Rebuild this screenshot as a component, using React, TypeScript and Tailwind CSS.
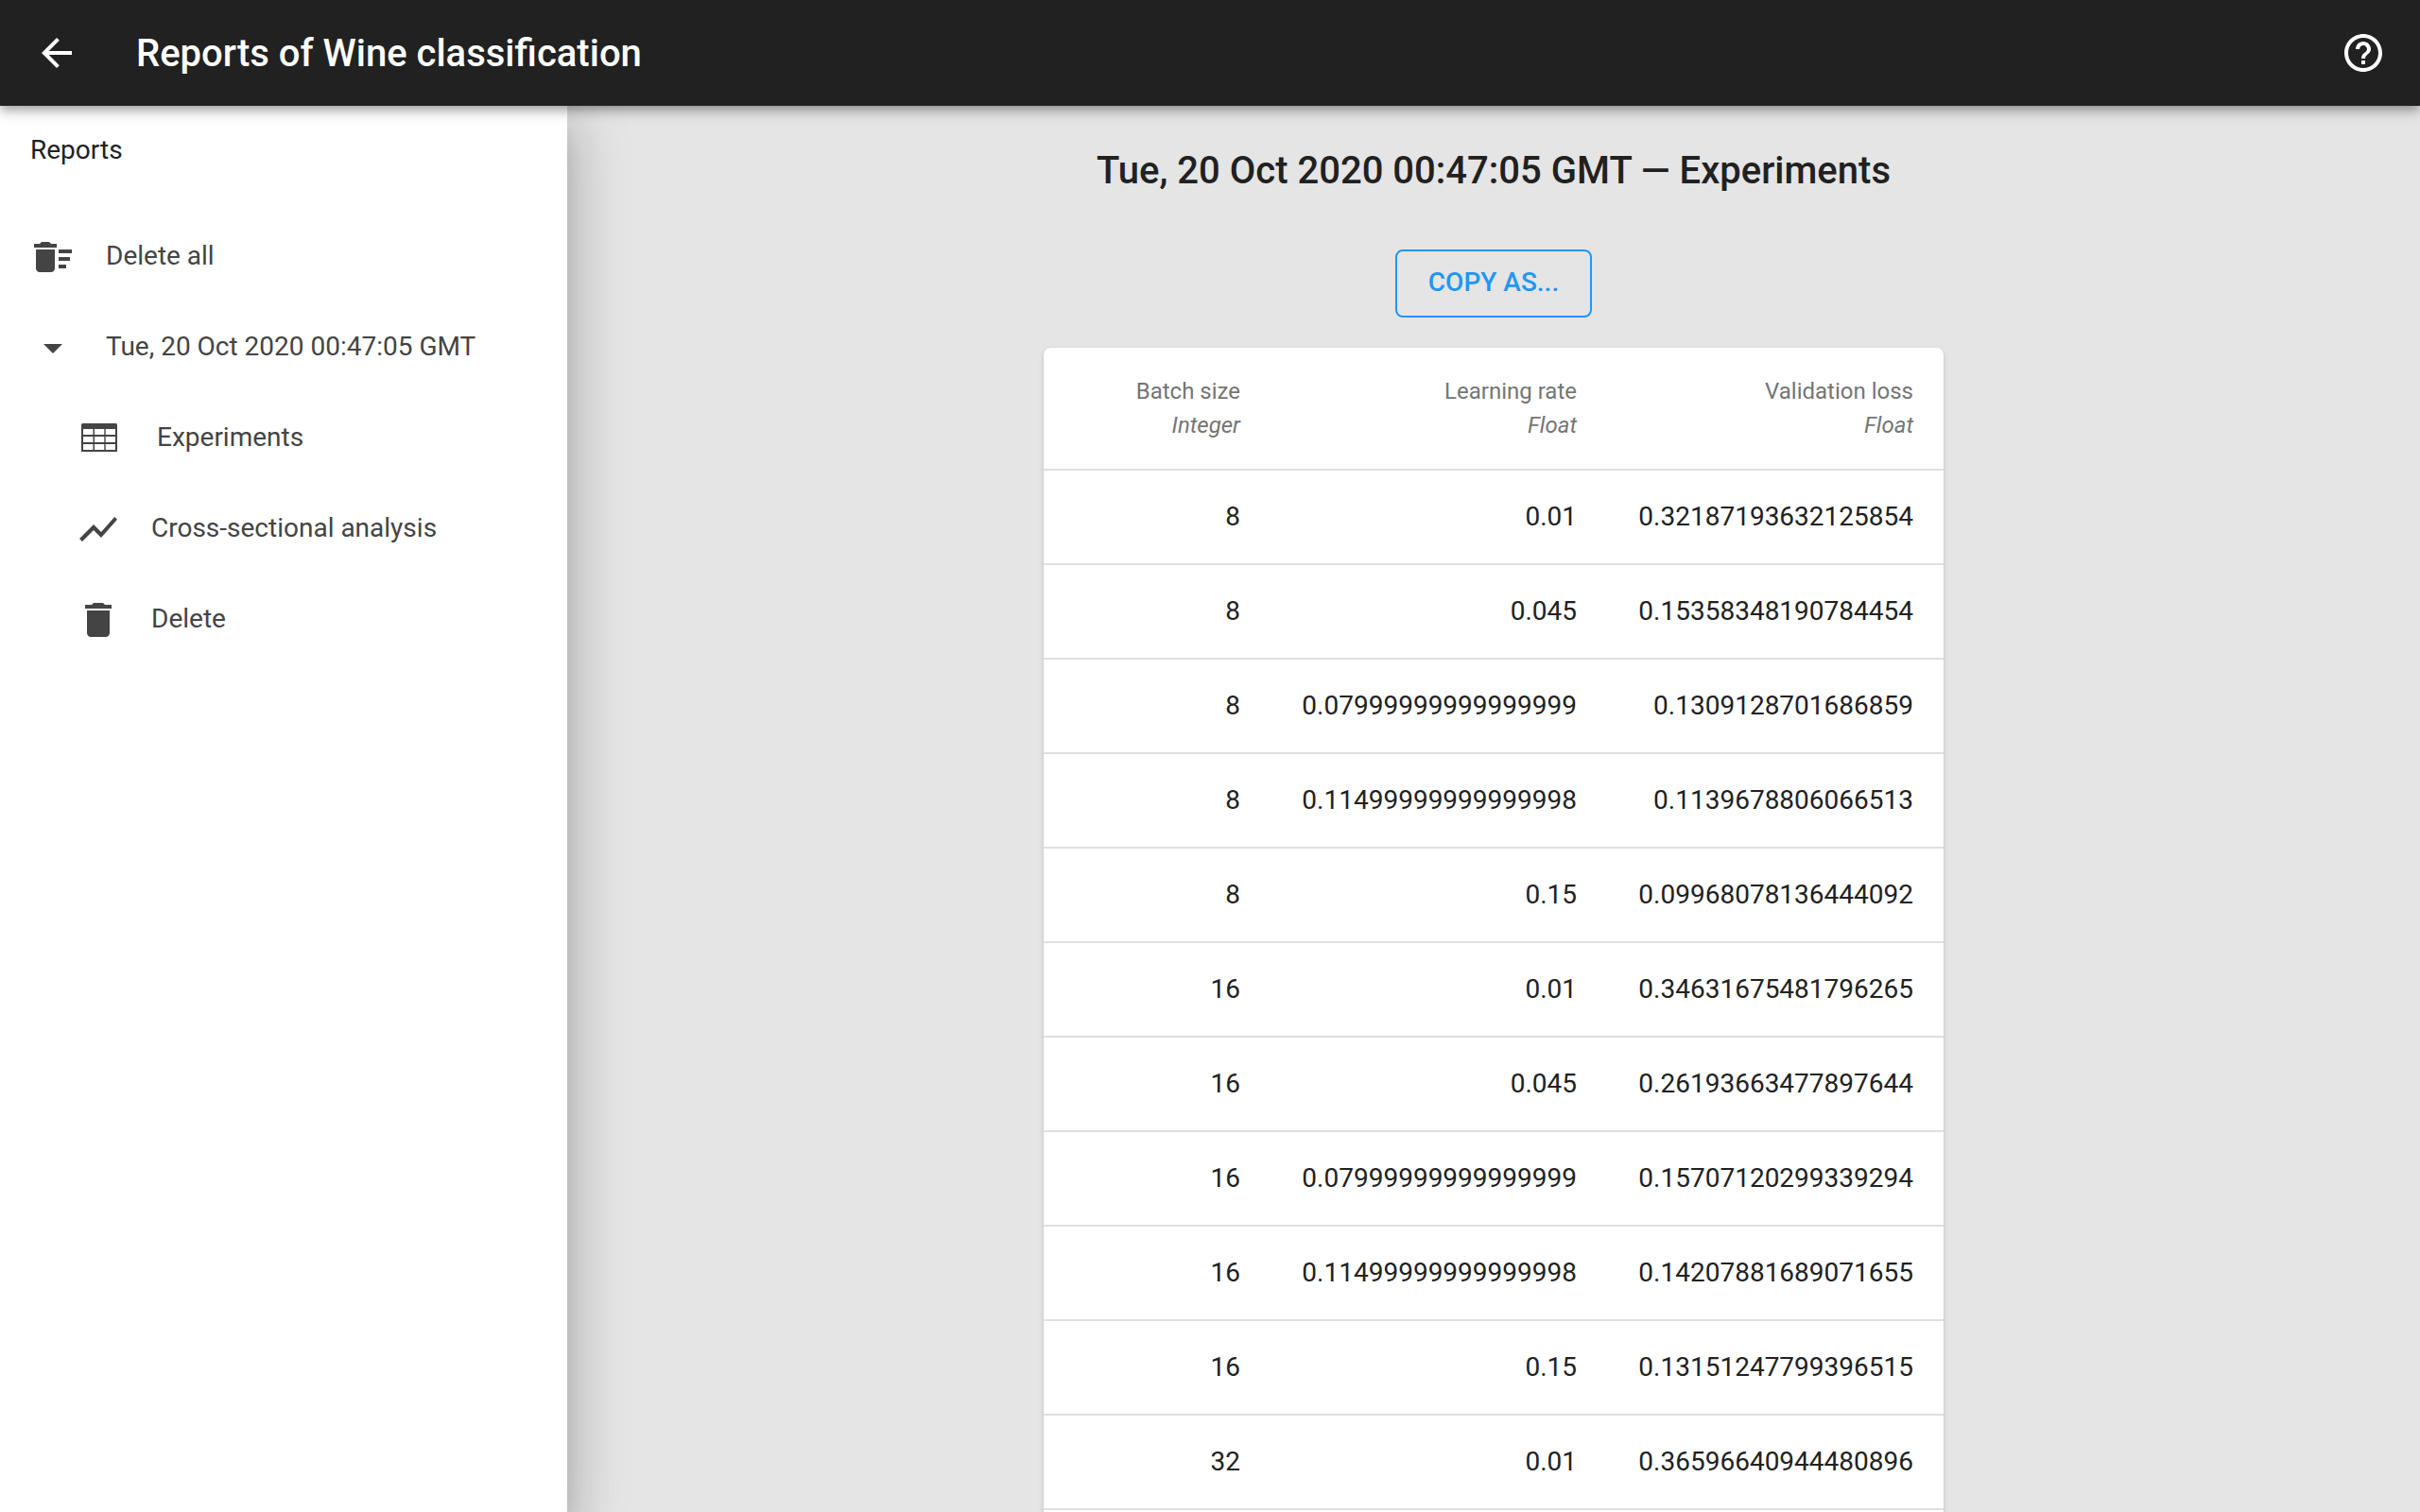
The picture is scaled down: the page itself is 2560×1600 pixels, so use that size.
import type { ReactNode } from "react";

type Row = [number, string, string];

const rows: Row[] = [
  [8, "0.01", "0.32187193632125854"],
  [8, "0.045", "0.15358348190784454"],
  [8, "0.07999999999999999", "0.1309128701686859"],
  [8, "0.11499999999999998", "0.1139678806066513"],
  [8, "0.15", "0.09968078136444092"],
  [16, "0.01", "0.34631675481796265"],
  [16, "0.045", "0.26193663477897644"],
  [16, "0.07999999999999999", "0.15707120299339294"],
  [16, "0.11499999999999998", "0.14207881689071655"],
  [16, "0.15", "0.13151247799396515"],
  [32, "0.01", "0.36596640944480896"],
];

const columns = [
  { name: "Batch size", type: "Integer", width: "min-w-60" },
  { name: "Learning rate", type: "Float", width: "min-w-[356px]" },
  { name: "Validation loss", type: "Float", width: "min-w-[356px]" },
];

const paths = {
  back: "M20 11H7.83l5.59-5.59L12 4l-8 8 8 8 1.41-1.41L7.83 13H20v-2z",
  help: "M11 18h2v-2h-2v2zm1-16C6.48 2 2 6.48 2 12s4.48 10 10 10 10-4.48 10-10S17.52 2 12 2zm0 18c-4.41 0-8-3.59-8-8s3.59-8 8-8 8 3.59 8 8-3.59 8-8 8zm0-14c-2.21 0-4 1.79-4 4h2c0-1.1.9-2 2-2s2 .9 2 2c0 2-3 1.75-3 5h2c0-2.25 3-2.5 3-5 0-2.21-1.79-4-4-4z",
  sweep: "M15 16h4v2h-4zm0-8h7v2h-7zm0 4h6v2h-6zM3 18c0 1.1.9 2 2 2h6c1.1 0 2-.9 2-2V8H3v10zM14 5h-3l-1-1H6L5 5H2v2h12z",
  down: "M7 10l5 5 5-5z",
  chart: "M3.5 18.49l6-6.01 4 4L22 6.92l-1.41-1.41-7.09 7.97-4-4L2 16.99z",
  trash: "M6 19c0 1.1.9 2 2 2h8c1.1 0 2-.9 2-2V7H6v12zM19 4h-3.5l-1-1h-5l-1 1H5v2h14V4z",
};

function Icon({ d }: { d: string }) {
  return (
    <svg viewBox="0 0 24 24" className="size-12 shrink-0 fill-current" aria-hidden="true">
      <path d={d} />
    </svg>
  );
}

function TableIcon() {
  return (
    <svg viewBox="0 0 48 48" className="size-12 shrink-0 fill-current" aria-hidden="true">
      <path
        fillRule="evenodd"
        d="M7.5 8h35a1.5 1.5 0 0 1 1.5 1.5V38H6V9.500a1.5 1.5 0 0 1 1.500-1.500zM8 14v6h10.500v-6zM20 14v6h10.300v-6zM31.700 14v6H42v-6zM8 22v6h10.500v-6zM20 22v6h10.300v-6zM31.700 22v6H42v-6zM8 30v6h10.500v-6zM20 30v6h10.300v-6zM31.700 30v6H42v-6z"
      />
    </svg>
  );
}

function NavItem({ icon, children, className }: { icon: ReactNode; children: ReactNode; className: string }) {
  return (
    <li>
      <button type="button" className={`flex h-24 w-full items-center text-left text-[28px] leading-10 ${className}`}>
        {icon}
        <span className="pb-0.5">{children}</span>
      </button>
    </li>
  );
}

export default function App() {
  return (
    <div className="flex h-screen flex-col overflow-hidden bg-[#e5e5e5] font-[Roboto,sans-serif] text-[#212121]">
      <header className="relative z-20 flex h-28 shrink-0 items-center bg-[#212121] px-9 text-white shadow-[0_4px_8px_-2px_rgba(0,0,0,0.2),0_8px_10px_0_rgba(0,0,0,0.14),0_2px_20px_0_rgba(0,0,0,0.12)]">
        <button type="button" aria-label="Back">
          <Icon d={paths.back} />
        </button>
        <h1 className="ml-15 flex-1 pt-0.5 text-[40px] leading-[56px] font-medium">Reports of Wine classification</h1>
        <button type="button" aria-label="Help">
          <Icon d={paths.help} />
        </button>
      </header>
      <div className="flex min-h-0 flex-1">
        <nav
          aria-label="Reports"
          className="relative z-10 w-[600px] shrink-0 bg-white pt-4 text-[#444] shadow-[0_16px_20px_-10px_rgba(0,0,0,0.2),0_32px_48px_4px_rgba(0,0,0,0.14),0_12px_60px_10px_rgba(0,0,0,0.12)]"
        >
          <h2 className="px-8 pt-[11px] pb-[9px] text-[28px] leading-10 text-[#212121]">Reports</h2>
          <ul className="mt-9">
            <NavItem icon={<Icon d={paths.sweep} />} className="gap-8 pl-8">Delete all</NavItem>
            <NavItem icon={<Icon d={paths.down} />} className="gap-8 pl-8">Tue, 20 Oct 2020 00:47:05 GMT</NavItem>
            <NavItem icon={<TableIcon />} className="gap-[38px] pl-20">Experiments</NavItem>
            <NavItem icon={<Icon d={paths.chart} />} className="gap-8 pl-20">Cross-sectional analysis</NavItem>
            <NavItem icon={<Icon d={paths.trash} />} className="gap-8 pl-20">Delete</NavItem>
          </ul>
        </nav>
        <main className="flex min-w-0 flex-1 flex-col items-center overflow-hidden pt-[41px]">
          <h2 className="text-[40px] leading-[56px] font-medium">Tue, 20 Oct 2020 00:47:05 GMT — Experiments</h2>
          <button
            type="button"
            className="mt-[55px] h-[72px] w-52 shrink-0 rounded-lg border-2 border-[#2196f3] pb-0.5 text-[28px] leading-10 font-medium text-[#2196f3]"
          >
            COPY AS...
          </button>
          <div className="mt-8 shrink-0 rounded-lg bg-white pb-8 shadow-[0_4px_2px_-2px_rgba(0,0,0,0.2),0_2px_2px_0_rgba(0,0,0,0.14),0_2px_6px_0_rgba(0,0,0,0.12)]">
            <table className="border-separate border-spacing-0 text-right">
              <thead>
                <tr>
                  {columns.map((c) => (
                    <th
                      key={c.name}
                      scope="col"
                      className={`h-[130px] border-b-2 border-[#e0e0e0] px-8 text-2xl leading-9 font-normal text-[#757575] ${c.width}`}
                    >
                      {c.name}
                      <br />
                      <i>{c.type}</i>
                    </th>
                  ))}
                </tr>
              </thead>
              <tbody>
                {rows.map((row) => (
                  <tr key={row.join()}>
                    {row.map((value, i) => (
                      <td key={i} className="h-25 border-b-2 border-[#e0e0e0] px-8 text-[28px] leading-10">
                        {value}
                      </td>
                    ))}
                  </tr>
                ))}
              </tbody>
            </table>
          </div>
        </main>
      </div>
    </div>
  );
}
